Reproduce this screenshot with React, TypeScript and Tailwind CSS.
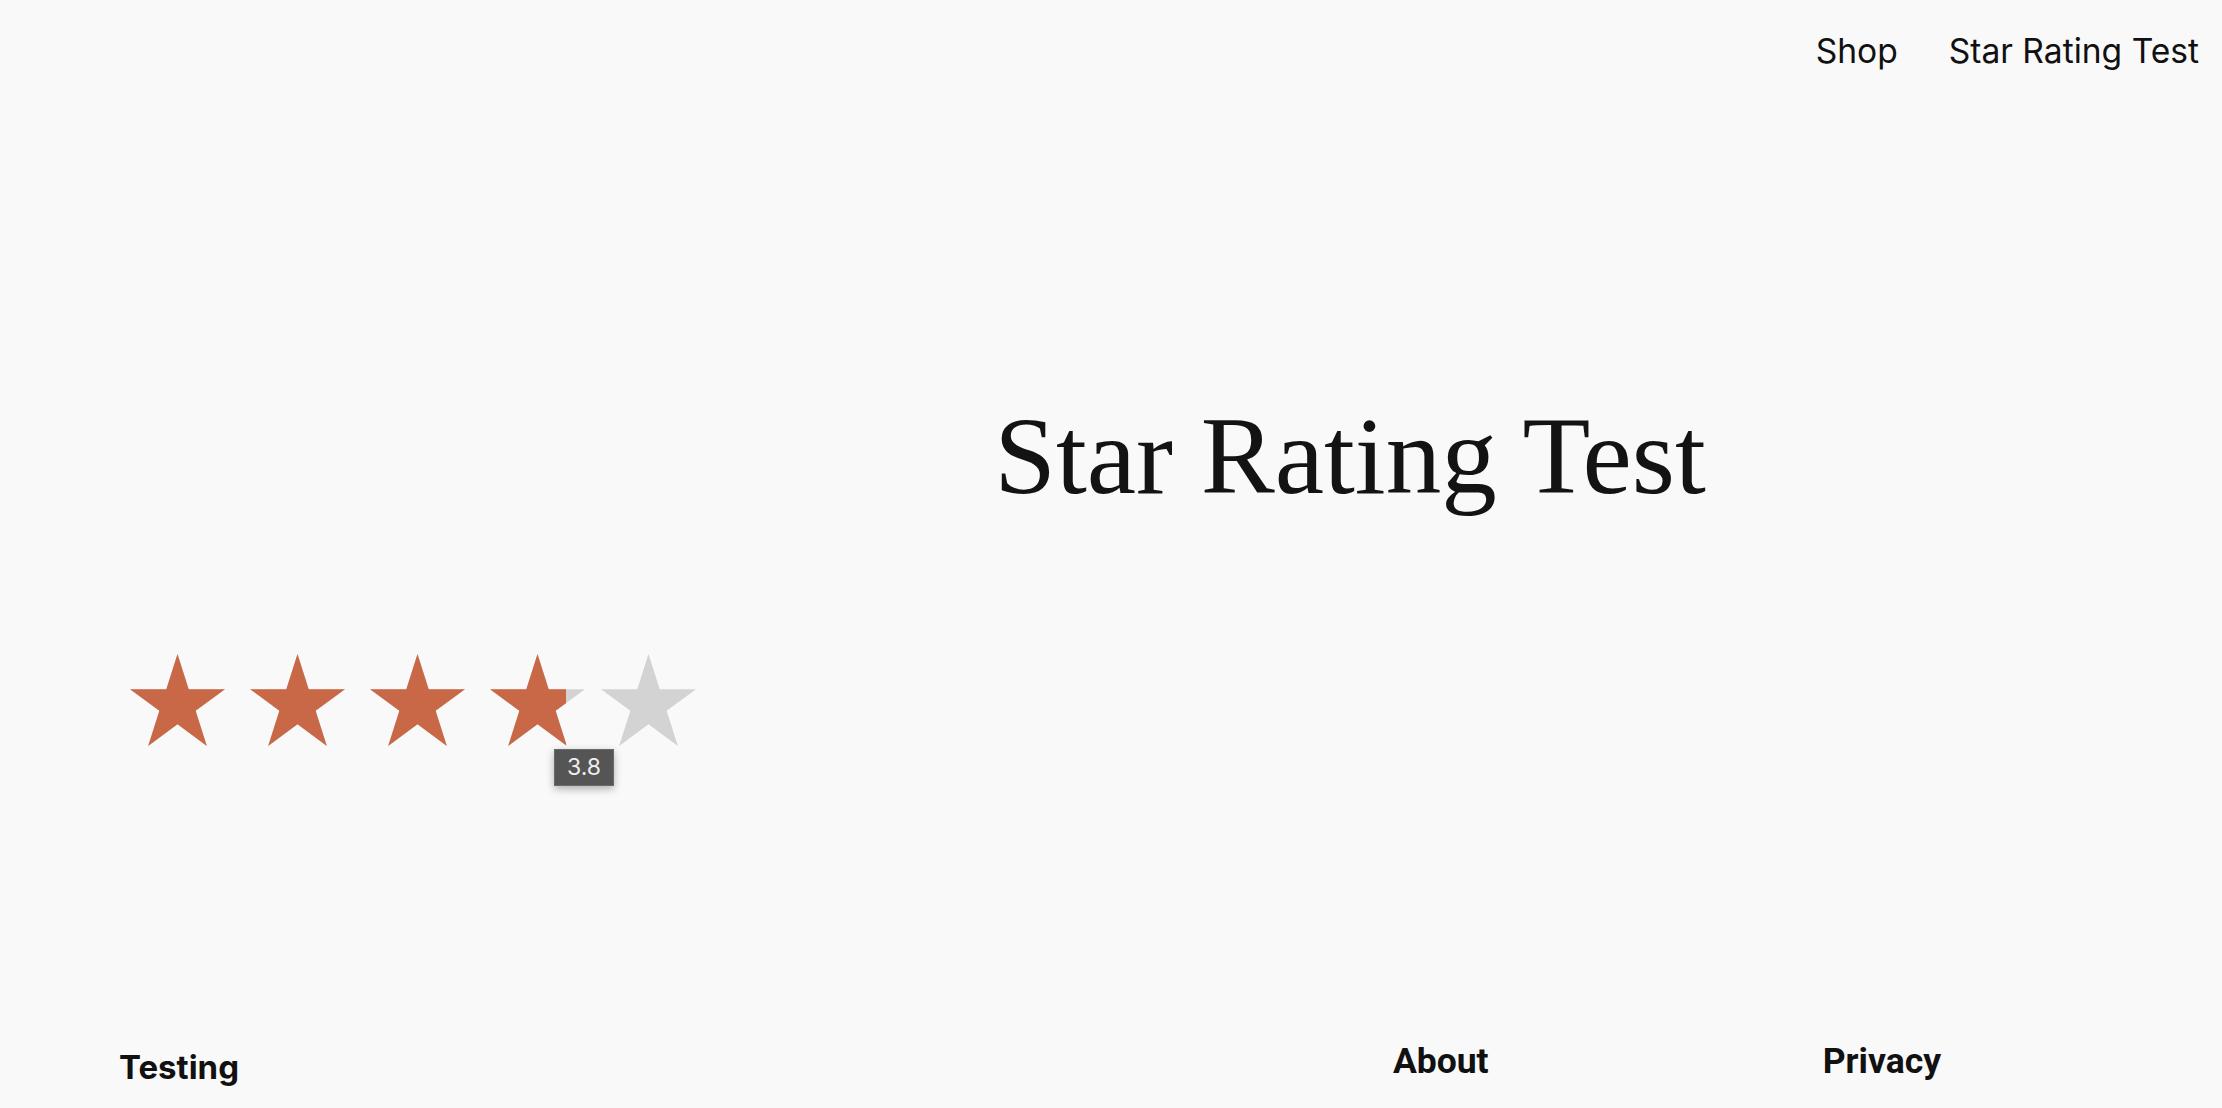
const STAR_POINTS =
  '47.55,0 58.78,34.55 95.1,34.55 65.71,55.9 76.94,90.45 47.55,69.1 18.16,90.45 29.39,55.9 0,34.55 36.32,34.55';

const rating = 3.8;

function StarShape({ color }: { color: string }) {
  return (
    <svg viewBox="0 0 95.1 90.45" width={95} height={92} className="block shrink-0" preserveAspectRatio="none">
      <polygon points={STAR_POINTS} fill={color} />
    </svg>
  );
}

// a star that is filled by `fill` (0..1) from the left
function Star({ fill }: { fill: number }) {
  return (
    <div className="relative w-[95px] h-[92px] shrink-0">
      <StarShape color="#d3d3d3" />
      <div className="absolute left-0 top-0 h-[92px] overflow-hidden" style={{ width: `${fill * 100}%` }}>
        <StarShape color="#c96847" />
      </div>
    </div>
  );
}

export default function App() {
  const stars = [0, 1, 2, 3, 4].map(i => Math.max(0, Math.min(1, rating - i)));

  return (
    <div className="min-h-screen bg-[#f9f9f9] text-[#111111] font-['Inter',sans-serif]">
      {/* Nav */}
      <header className="flex justify-end gap-[51px] pt-[30px] pr-[23px] text-[33.6px] leading-[41px]">
        <a>Shop</a>
        <a>Star Rating Test</a>
      </header>

      {/* Title */}
      <h1 className="mt-[325px] pl-[478px] flex justify-center font-['Liberation_Serif',serif] text-[111px] leading-[120px] font-normal text-[#131313]">
        Star Rating Test
      </h1>

      {/* Rating */}
      <div className="mt-[138px] pl-[130px]">
        <div className="relative inline-flex gap-[25px]">
          {stars.map((f, i) => (
            <div key={i} className={i === 4 ? '-ml-[9px]' : ''}>
              <Star fill={f} />
            </div>
          ))}
          <div className="absolute left-[424px] top-[95px] h-[37px] w-[60px] flex items-center justify-center bg-[#555555] border border-[#6a6a6a] text-[#eeeeee] text-[23px] shadow-[0_3px_8px_rgba(0,0,0,0.3)]">
            {rating}
          </div>
        </div>
      </div>

      {/* Footer */}
      <footer className="mt-[289px] flex items-start pl-[119px] pr-[281px] pb-10">
        <div className="mt-[6px] text-[33px] font-bold leading-[40px]">Testing</div>
        <div className="ml-auto flex gap-[334px] font-['Roboto',sans-serif] text-[35.5px] font-bold leading-[40px]">
          <a>About</a>
          <a>Privacy</a>
        </div>
      </footer>
    </div>
  );
}
